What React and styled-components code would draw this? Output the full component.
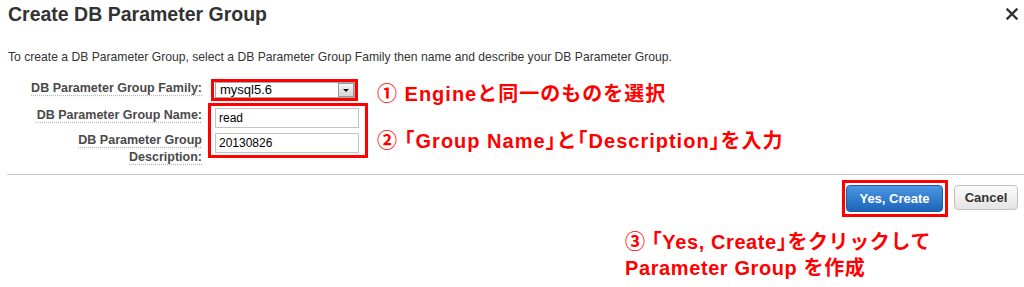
import styled, { createGlobalStyle } from "styled-components";

const GlobalStyle = createGlobalStyle`
  html, body {
    margin: 0;
    padding: 0;
    background: #fff;
  }
  body {
    font-family: "Liberation Sans", Arial, sans-serif;
    color: #333;
  }
`;

function App() {
  return (
    <Dialog>
      <GlobalStyle />
      <Header>
        <Title>Create DB Parameter Group</Title>
        <Close aria-label="close">
          <svg width="12" height="12" viewBox="0 0 12 12">
            <path d="M1.5 1.5 L10.5 10.5 M10.5 1.5 L1.5 10.5" stroke="#333" strokeWidth="2.4" strokeLinecap="square" />
          </svg>
        </Close>
      </Header>

      <Intro>
        To create a DB Parameter Group, select a DB Parameter Group Family then name and describe your DB Parameter Group.
      </Intro>

      <Form>
        <Label $row="1">
          <span>DB Parameter Group Family:</span>
        </Label>
        <Mark $row="1" $width={147} $inset={3} $pad="0 0 0 1px">
          <Select>
            mysql5.6
            <Arrow />
          </Select>
        </Mark>
        <Note $row="1" $top={3}>① Engineと同一のものを選択</Note>

        <Label $row="2" $top={4}>
          <span>DB Parameter Group Name:</span>
        </Label>
        <Mark $row="2 / 4" $width={160} $pad="2px 0 0 4px">
          <Fields>
            <Input>read</Input>
            <Input>20130826</Input>
          </Fields>
        </Mark>
        <Note $row="2 / 4" $top={26}>② 「Group Name」と「Description」を入力</Note>

        <Label $row="3" $top={2}>
          <span>DB Parameter Group</span>
          <br />
          <span>Description:</span>
        </Label>
      </Form>

      <Divider />

      <Footer>
        <Mark $pad="2px 2px 2px 1px">
          <Button $primary>Yes, Create</Button>
        </Mark>
        <Button>Cancel</Button>
      </Footer>

      <Callout>
        ③ 「Yes, Create」をクリックして
        <br />
        Parameter Group を作成
      </Callout>
    </Dialog>
  );
}

const Dialog = styled.div`
  width: 1024px;
  height: 287px;
  overflow: hidden;
  background: #fff;
`;

const Header = styled.div`
  display: flex;
  align-items: center;
  justify-content: space-between;
  height: 28px;
  padding: 0 6px 0 8px;
`;

const Title = styled.h1`
  margin: 0;
  font-size: 19.5px;
  line-height: 26px;
  font-weight: bold;
  color: #333;
`;

const Close = styled.div`
  width: 12px;
  height: 12px;
  display: flex;
  svg {
    display: block;
  }
`;

const Intro = styled.p`
  margin: 22px 0 0 8px;
  font-size: 12.15px;
  line-height: 14px;
  color: #333;
`;

const Form = styled.div`
  display: grid;
  grid-template-columns: 202px 160px 1fr;
  grid-template-rows: 24px 27px 28px;
  column-gap: 6px;
  margin-top: 15px;
`;

const Label = styled.div`
  grid-column: 1;
  grid-row: ${(p) => p.$row};
  padding-top: ${(p) => p.$top || 1}px;
  text-align: right;
  font-size: 12.5px;
  line-height: 17px;
  font-weight: bold;
  color: #4a4a4a;
  white-space: nowrap;
  span {
    text-decoration: underline dotted #b5b5b5;
    text-underline-offset: 3px;
  }
`;

const Mark = styled.div`
  grid-column: 2;
  grid-row: ${(p) => p.$row || "auto"};
  align-self: start;
  box-sizing: border-box;
  width: ${(p) => (p.$width ? `${p.$width}px` : "auto")};
  height: ${(p) => (p.$row === "2 / 4" ? "55px" : "auto")};
  margin-left: ${(p) => p.$inset || 0}px;
  padding: ${(p) => p.$pad};
  border: 3px solid #f00;
`;

const Select = styled.div`
  position: relative;
  box-sizing: border-box;
  width: 140px;
  height: 16px;
  padding-left: 4px;
  border: 1px solid #a8a8a8;
  background: #fff;
  font-size: 13px;
  line-height: 14px;
  color: #000;
`;

const Arrow = styled.span`
  position: absolute;
  right: 0;
  top: 0;
  box-sizing: border-box;
  width: 16px;
  height: 14px;
  border: 1px solid #9a9a9a;
  background: linear-gradient(#f6f6f6, #d4d4d4);
  &::after {
    content: "";
    position: absolute;
    left: 4px;
    top: 5px;
    border-left: 3.5px solid transparent;
    border-right: 3.5px solid transparent;
    border-top: 3.5px solid #111;
  }
`;

const Fields = styled.div`
  display: flex;
  flex-direction: column;
  gap: 5px;
`;

const Input = styled.div`
  box-sizing: border-box;
  width: 144px;
  height: 20px;
  padding-left: 3px;
  border: 1px solid #c4c4c4;
  background: #fff;
  font-size: 12px;
  line-height: 18px;
  color: #000;
`;

const Note = styled.div`
  grid-column: 3;
  grid-row: ${(p) => p.$row};
  align-self: start;
  padding: ${(p) => p.$top}px 0 0 3px;
  font-family: "Liberation Sans", "Noto Sans CJK JP", sans-serif;
  font-feature-settings: "halt";
  font-size: 20px;
  line-height: 24px;
  letter-spacing: 1px;
  font-weight: bold;
  color: #f00;
  white-space: nowrap;
`;

const Divider = styled.div`
  height: 1px;
  margin: 16px 0 0 7px;
  background: #c8c8c8;
`;

const Footer = styled.div`
  display: flex;
  justify-content: flex-end;
  align-items: flex-start;
  gap: 6px;
  padding: 5px 6px 0 0;
`;

const Button = styled.button`
  box-sizing: border-box;
  width: ${(p) => (p.$primary ? "97px" : "64px")};
  height: ${(p) => (p.$primary ? "27px" : "25px")};
  margin-top: ${(p) => (p.$primary ? "0" : "5px")};
  padding: 0;
  display: block;
  border-radius: 4px;
  border: 1px solid ${(p) => (p.$primary ? "#1b5aa8" : "#c2c2c2")};
  background: ${(p) =>
    p.$primary
      ? "linear-gradient(#4b97e2, #1c64ba)"
      : "linear-gradient(#fbfbfb, #e4e4e4)"};
  color: ${(p) => (p.$primary ? "#fff" : "#333")};
  font-family: "Liberation Sans", Arial, sans-serif;
  font-size: 13px;
  font-weight: bold;
`;

const Callout = styled.div`
  margin: 12px 0 0 625px;
  font-family: "Liberation Sans", "Noto Sans CJK JP", sans-serif;
  font-feature-settings: "halt";
  font-size: 20px;
  line-height: 26px;
  letter-spacing: 0.6px;
  font-weight: bold;
  color: #f00;
  white-space: nowrap;
`;

export default App;
